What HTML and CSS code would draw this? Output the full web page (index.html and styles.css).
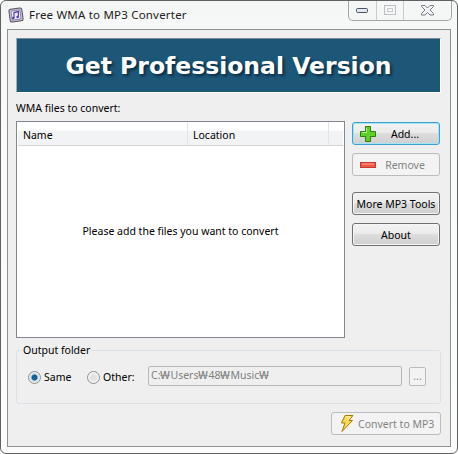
FILE: index.html
```html
<!DOCTYPE html>
<html lang="en">
<head>
    <meta charset="UTF-8">
    <title>Free WMA to MP3 Converter</title>
    <link rel="stylesheet" href="styles.css">
</head>
<body>
<div class="window">
    <div class="titlebar">
        <svg class="app-icon" width="16" height="16" viewBox="0 0 16 16">
            <rect x="1.500" y="1.500" width="13" height="13" rx="2" fill="#c9c5d6" stroke="#55535f" transform="rotate(-8 8 8)"/>
            <rect x="3.500" y="3.500" width="9" height="9" rx="1" fill="#eeeaf6" stroke="#8d88a5" transform="rotate(-8 8 8)"/>
            <path d="M6 11V5.600l4.400-1V10" fill="none" stroke="#5a3ea8" stroke-width="1.200"/>
            <circle cx="5.200" cy="11" r="1.200" fill="#5a3ea8"/>
            <circle cx="9.600" cy="10" r="1.200" fill="#5a3ea8"/>
        </svg>
        <span class="title">Free WMA to MP3 Converter</span>
        <div class="caption-btns">
            <div class="cap cap-min"><svg width="13" height="7" viewBox="0 0 13 7"><rect x="0.500" y="1.500" width="11" height="4" rx="1" fill="#e4e8ee" stroke="#4b5260"/></svg></div>
            <div class="cap cap-max"><svg width="13" height="11" viewBox="0 0 13 11"><rect x="0.500" y="0.500" width="11" height="9" fill="none" stroke="#bcc0c6"/><rect x="3.500" y="3.500" width="5" height="3" fill="none" stroke="#c6c9ce"/></svg></div>
            <div class="cap cap-close"><svg width="13" height="11" viewBox="0 0 13 11"><path d="M0.500 0.500h3.500l2.500 2.500 2.500-2.500h3.500v1l-3.500 3.500 3.500 3.500v1.500h-3.500l-2.500-2.500-2.500 2.500h-3.500v-1.500l3.500-3.500-3.500-3.500z" fill="#f2f4f6" stroke="#767c86"/></svg></div>
        </div>
    </div>
    <div class="panel">
        <div class="banner">Get Professional Version</div>
        <div class="files-label">WMA files to convert:</div>
        <div class="main-row">
            <div class="list">
                <div class="list-head">
                    <div class="col col-name">Name</div>
                    <div class="col col-location">Location</div>
                    <div class="col col-rest"></div>
                </div>
                <div class="list-body">Please add the files you want to convert</div>
            </div>
            <div class="side">
                <div class="btn btn-focus btn-icon">
                    <svg width="18" height="18" viewBox="0 0 18 18"><path d="M6.500 1.500h5v5h5v5h-5v5h-5v-5h-5v-5h5z" fill="#5fd02a" stroke="#2c7d12"/><path d="M7.500 3v4.500H3" fill="none" stroke="#b6f28a"/></svg>
                    <span class="btn-text">Add...</span>
                </div>
                <div class="btn btn-off btn-icon">
                    <svg width="18" height="18" viewBox="0 0 18 18"><rect x="1.500" y="6.500" width="15" height="5" fill="#ee5a48" stroke="#c23a2c"/><rect x="3" y="7.500" width="12" height="1" fill="#f8a295"/></svg>
                    <span class="btn-text">Remove</span>
                </div>
                <div class="btn btn-more">More MP3 Tools</div>
                <div class="btn">About</div>
            </div>
        </div>
        <div class="group">
            <div class="legend">Output folder</div>
            <div class="radio radio-on"></div>
            <span class="radio-label label-same">Same</span>
            <div class="radio"></div>
            <span class="radio-label label-other">Other:</span>
            <div class="path-input">C:<span class="won">₩</span>Users<span class="won">₩</span>48<span class="won">₩</span>Music<span class="won">₩</span></div>
            <div class="browse">...</div>
        </div>
        <div class="bottom-row">
            <div class="btn btn-off btn-convert">
                <svg width="14" height="17" viewBox="0 0 14 17"><path d="M5 0.500h8l-4 5h3.500L2 16.500 5 8H1.500z" fill="#f9d94e" stroke="#a67a08"/><path d="M5.500 2h4.500L7 6.500" fill="none" stroke="#fff3b0"/></svg>
                <span>Convert to MP3</span>
            </div>
        </div>
    </div>
</div>
</body>
</html>
```

FILE: styles.css
```css
html, body{
    margin:0;
    padding:0;
}
body{
    width:458px;
    height:454px;
    overflow:hidden;
    background-color:#fff;
    font-family:"Noto Sans", "Open Sans", sans-serif;
    font-size:10.5px;
    color:#000;
}
.window{
    box-sizing:border-box;
    width:458px;
    height:454px;
    padding:0 6px 6px;
    border:1px solid #5f6163;
    border-radius:6px;
    background:linear-gradient(#f4f5f5, #f8f9f9 40px, #fdfdfd);
    display:flex;
    flex-direction:column;
}
.titlebar{
    height:28px;
    flex:none;
    display:flex;
    align-items:flex-start;
}
.app-icon{
    margin:6px 0 0 1px;
}
.title{
    margin:6px 0 0 5px;
    font-size:11.5px;
    letter-spacing:0.2px;
    color:#222;
}
.caption-btns{
    margin:0 -1px 0 auto;
    width:102px;
    height:19px;
    display:flex;
    border:1px solid #a4a6a9;
    border-top:none;
    border-radius:0 0 5px 5px;
    background:#f5f6f6;
}
.cap{
    display:flex;
    align-items:center;
    justify-content:center;
    border-right:1px solid #c9cbce;
}
.cap-min{
    width:27px;
}
.cap-max{
    width:26px;
}
.cap-close{
    flex:1;
    border-right:none;
}
.panel{
    flex:1;
    box-sizing:border-box;
    border:1px solid #8e9093;
    background-color:#efefef;
    padding:8px 9px 0 8px;
    display:flex;
    flex-direction:column;
}
.banner{
    height:55px;
    flex:none;
    box-sizing:border-box;
    border-top:1px solid #7d8a94;
    border-left:1px solid #a5adb4;
    border-bottom:1px solid #fff;
    border-right:1px solid #fff;
    background-color:#1d5778;
    color:#fff;
    font-family:"DejaVu Sans", sans-serif;
    font-weight:bold;
    font-size:23.5px;
    text-align:center;
    line-height:54px;
    text-shadow:2px 2px 3px #0a2a40;
}
.files-label{
    margin-top:7px;
    height:21px;
    line-height:16px;
}
.main-row{
    display:flex;
    align-items:flex-start;
    gap:7px;
}
.list{
    box-sizing:border-box;
    width:329px;
    height:217px;
    border:1px solid #828790;
    background-color:#fff;
    display:flex;
    flex-direction:column;
    padding:0 1px;
}
.list-head{
    height:23px;
    flex:none;
    display:flex;
    border-bottom:1px solid #d5d5d5;
    background:linear-gradient(#fff 35%, #f2f3f4 40%, #f2f3f4);
}
.col{
    box-sizing:border-box;
    padding-left:5px;
    line-height:26px;
    border-right:1px solid #e3e4e6;
}
.col-name{
    width:170px;
}
.col-location{
    width:141px;
}
.col-rest{
    flex:1;
    border-right:none;
}
.list-body{
    flex:1;
    display:flex;
    align-items:center;
    justify-content:center;
    padding-bottom:22px;
}
.side{
    width:88px;
    padding-top:1px;
    display:flex;
    flex-direction:column;
    gap:8px;
}
.btn{
    box-sizing:border-box;
    height:23px;
    border:1px solid #707070;
    border-radius:3px;
    background:linear-gradient(#f2f2f2, #ebebeb 45%, #dddddd 50%, #cfcfcf);
    box-shadow:inset 0 0 0 1px #f6f6f6;
    display:flex;
    align-items:center;
    justify-content:center;
    white-space:nowrap;
}
.btn-icon{
    justify-content:flex-start;
    padding-left:6px;
}
.btn-icon .btn-text{
    flex:1;
    text-align:center;
    padding-right:6px;
}
.btn-focus{
    border-color:#3c9fd0;
    box-shadow:inset 0 0 0 1px #a5e3f6;
}
.btn-off{
    border-color:#bcbcbc;
    background:#f3f3f3;
    box-shadow:none;
    color:#838383;
}
.btn-more{
    margin-top:8px;
}
.group{
    position:relative;
    box-sizing:border-box;
    height:54px;
    margin-top:12px;
    padding:15px 13px 0 11px;
    border:1px solid #d9e0e6;
    border-radius:3px;
    display:flex;
    align-items:flex-start;
}
.legend{
    position:absolute;
    top:-8px;
    left:5px;
    padding:0 1px;
    background-color:#efefef;
    line-height:15px;
}
.radio{
    box-sizing:border-box;
    flex:none;
    width:13px;
    height:13px;
    margin-top:5px;
    border:1px solid #8e8f8f;
    border-radius:50%;
    background:radial-gradient(circle, #e2e2e2 30%, #f7f7f7 70%);
}
.radio-on{
    background:radial-gradient(circle, #0f6ea8 0, #0f5b90 30%, #c5d6e2 45%, #f4f4f4 70%);
}
.radio-label{
    flex:none;
    margin:3px 0 0 3px;
    line-height:17px;
}
.label-same{
    width:43px;
}
.label-other{
    width:45px;
}
.path-input{
    box-sizing:border-box;
    flex:none;
    width:254px;
    height:20px;
    padding-left:2px;
    border:1px solid #b8b8b8;
    border-radius:2px;
    line-height:17px;
    color:#7f7f7f;
}
.won{
    display:inline-block;
    width:10px;
    text-align:center;
    transform:scaleX(1.4);
}
.browse{
    box-sizing:border-box;
    flex:none;
    width:17px;
    height:19px;
    margin:1px 0 0 7px;
    border:1px solid #bcbcbc;
    border-radius:2px;
    background-color:#f3f3f3;
    text-align:center;
    line-height:17px;
    color:#8a8a8a;
}
.bottom-row{
    margin-top:8px;
    display:flex;
    justify-content:flex-end;
}
.btn-convert{
    width:110px;
    justify-content:flex-start;
    padding-left:8px;
    gap:4px;
}
```
